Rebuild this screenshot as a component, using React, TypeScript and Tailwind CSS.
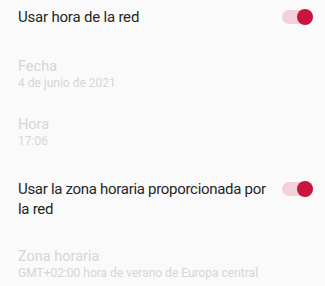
import React from "react";

function Toggle() {
  return (
    <div className="relative w-[31px] h-[16px] shrink-0 flex items-center">
      <div className="w-[31px] h-[14px] rounded-full bg-[#f3d0da]" />
      <div className="absolute right-0 top-0 w-[16px] h-[16px] rounded-full bg-[#c8143f]" />
    </div>
  );
}

export default function App() {
  return (
    <div
      className="w-[325px] h-[286px] bg-[#fafafa] overflow-hidden pl-[18px] pr-[12px]"
      style={{ fontFamily: "Roboto, 'Liberation Sans', sans-serif" }}
    >
      <div className="flex items-center justify-between pt-[7px]">
        <span className="text-[15px] leading-[20px] text-[#262626] tracking-[-0.2px]">Usar hora de la red</span>
        <Toggle />
      </div>

      <div className="mt-[31px] flex flex-col">
        <span className="text-[14.5px] leading-[18px] text-[#d6d6d6]">Fecha</span>
        <span className="text-[12px] leading-[14px] text-[#d6d6d6]">4 de junio de 2021</span>
      </div>

      <div className="mt-[26px] flex flex-col">
        <span className="text-[14.5px] leading-[18px] text-[#d6d6d6]">Hora</span>
        <span className="text-[12px] leading-[14px] text-[#d6d6d6]">17:06</span>
      </div>

      <div className="mt-[31px] flex items-start justify-between">
        <span className="text-[15px] leading-[20px] text-[#262626] tracking-[-0.3px] w-[262px]">
          Usar la zona horaria proporcionada por la red
        </span>
        <div className="mt-[2px]">
          <Toggle />
        </div>
      </div>

      <div className="mt-[29px] flex flex-col">
        <span className="text-[14.5px] leading-[18px] text-[#d6d6d6]">Zona horaria</span>
        <span className="text-[12px] leading-[14px] text-[#d6d6d6]">
          GMT+02:00 hora de verano de Europa central
        </span>
      </div>
    </div>
  );
}
